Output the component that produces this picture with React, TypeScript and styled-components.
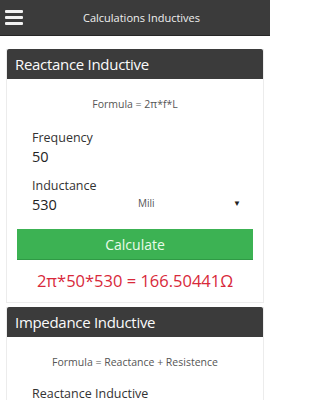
import React from "react";
import styled, { createGlobalStyle } from "styled-components";

const Global = createGlobalStyle`
  html, body { margin: 0; padding: 0; background: #ffffff; }
  body { font-family: "Open Sans", "Noto Sans", sans-serif; width: 270px; height: 400px; overflow: hidden; }
`;

const Page = styled.div`
  width: 270px;
  height: 400px;
  overflow: hidden;
  background: #ffffff;
`;

const TopBar = styled.header`
  height: 35px;
  background: #3b3b3b;
  border-bottom: 1px solid #262626;
  display: flex;
  align-items: center;
`;

const Burger = styled.div`
  width: 18px;
  margin-left: 5px;
  display: flex;
  flex-direction: column;
  gap: 3px;
  span {
    display: block;
    height: 3px;
    background: #f2f2f2;
    border-radius: 1px;
  }
`;

const TopTitle = styled.div`
  flex: 1;
  text-align: center;
  color: #f0f0f0;
  font-size: 11px;
  padding-right: 10px;
  margin-top: -1px;
`;

const Content = styled.main`
  padding: 13px 6px 0 6px;
  display: flex;
  flex-direction: column;
  gap: 4px;
`;

const Card = styled.section`
  border: 1px solid #ececec;
  border-top: none;
  background: #fff;
`;

const CardHead = styled.h2`
  margin: 0;
  height: 30px;
  background: #3b3b3b;
  color: #fafafa;
  font-size: 15px;
  letter-spacing: -0.3px;
  font-weight: 400;
  display: flex;
  align-items: center;
  padding-left: 8px;
  border-radius: 2px 2px 0 0;
`;

const CardBody = styled.div`
  padding: 18px 10px 10px 10px;
`;

const Formula = styled.div`
  text-align: center;
  color: #555;
  font-size: 10.5px;
`;

const Field = styled.div<{ $top: number }>`
  margin-top: ${(p) => p.$top}px;
  padding-left: 15px;
  display: flex;
  flex-direction: column;
`;

const Label = styled.div`
  color: #333;
  font-size: 12.5px;
  line-height: 14px;
`;

const ValueRow = styled.div`
  display: flex;
  align-items: center;
  height: 22px;
`;

const Value = styled.div`
  color: #222;
  font-size: 14.5px;
  width: 106px;
`;

const Select = styled.div`
  flex: 1;
  display: flex;
  justify-content: space-between;
  align-items: center;
  color: #555;
  font-size: 10px;
  padding-right: 12px;
  margin-top: -3px;
`;

const Arrow = styled.span`
  font-size: 8px;
  color: #222;
`;

const Button = styled.button`
  display: block;
  width: 236px;
  height: 31px;
  margin: 14px 0 0 0;
  background: #3cb253;
  border: none;
  border-bottom: 1px solid #2f9a45;
  color: #e9fbe9;
  font-family: inherit;
  font-size: 14px;
  padding: 0;
`;

const Result = styled.div`
  text-align: center;
  color: #d8293a;
  font-size: 16.5px;
  margin-top: 9px;
`;

export default function App() {
  return (
    <Page>
      <Global />
      <TopBar>
        <Burger>
          <span />
          <span />
          <span />
        </Burger>
        <TopTitle>Calculations Inductives</TopTitle>
      </TopBar>
      <Content>
        <Card>
          <CardHead>Reactance Inductive</CardHead>
          <CardBody>
            <Formula>Formula = 2π*f*L</Formula>
            <Field $top={20}>
              <Label>Frequency</Label>
              <ValueRow>
                <Value>50</Value>
              </ValueRow>
            </Field>
            <Field $top={12}>
              <Label>Inductance</Label>
              <ValueRow>
                <Value>530</Value>
                <Select>
                  <span>Mili</span>
                  <Arrow>▼</Arrow>
                </Select>
              </ValueRow>
            </Field>
            <Button>Calculate</Button>
            <Result>2π*50*530 = 166.50441Ω</Result>
          </CardBody>
        </Card>
        <Card>
          <CardHead>Impedance Inductive</CardHead>
          <CardBody>
            <Formula>Formula = Reactance + Resistence</Formula>
            <Field $top={18}>
              <Label>Reactance Inductive</Label>
            </Field>
          </CardBody>
        </Card>
      </Content>
    </Page>
  );
}
